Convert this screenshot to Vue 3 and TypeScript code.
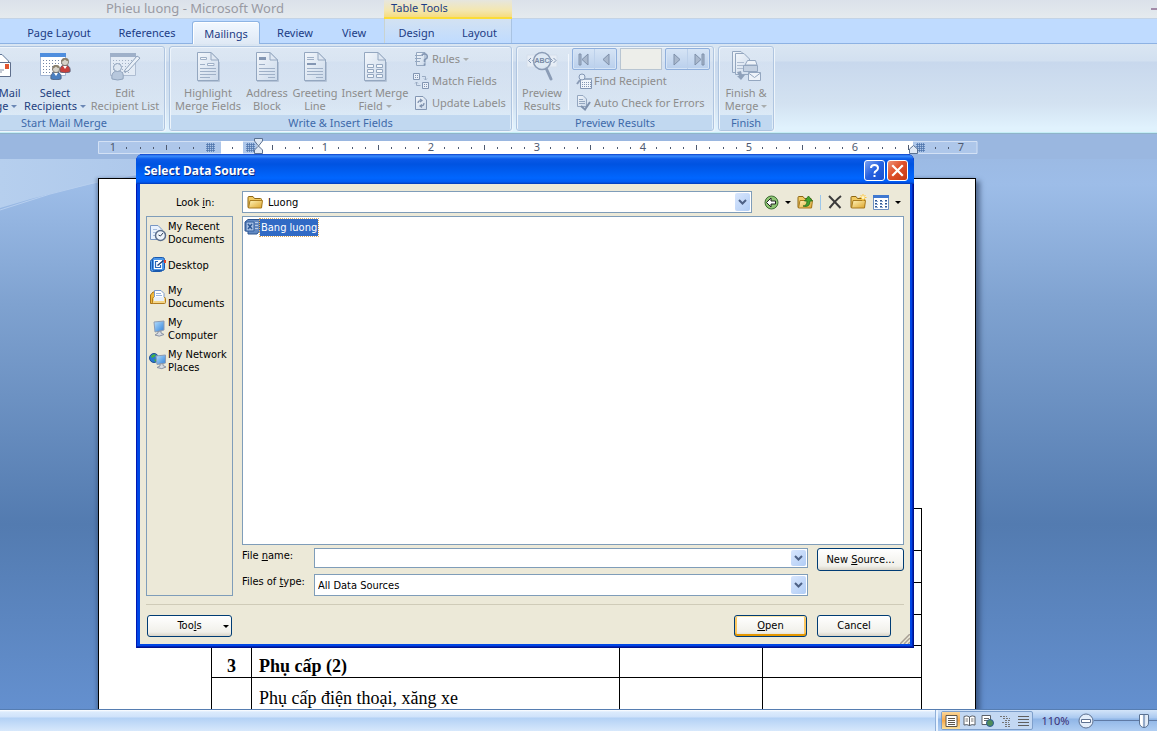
<script setup lang="ts">
import { ref } from 'vue'

interface Tab { label: string; width: number; active?: boolean }
interface Tick { x: number; kind: 'dot' | 'half' }
interface Place { id: string; lines: string[] }

const tabs: Tab[] = [
  { label: 'Page Layout', width: 88 },
  { label: 'References', width: 88 },
  { label: 'Mailings', width: 68, active: true },
  { label: 'Review', width: 70 },
  { label: 'View', width: 48 },
]
const toolTabs = ['Design', 'Layout']

const INCH = 106
const ORIGIN = 121
const ticks: Tick[] = []
for (let i = -9; i <= 56; i++) {
  if (i % 8 === 0 || i === -1 || i === 2 || i === 53) continue
  const x = Math.round(ORIGIN + (i * INCH) / 8)
  if (x > 2 && x < 878) ticks.push({ x, kind: Math.abs(i) % 4 === 0 ? 'half' : 'dot' })
}
const numbers = [-1, 1, 2, 3, 4, 5, 6, 7].map((n) => ({ n: Math.abs(n), x: ORIGIN + n * INCH }))

const places: Place[] = [
  { id: 'recent', lines: ['My Recent', 'Documents'] },
  { id: 'desktop', lines: ['Desktop'] },
  { id: 'docs', lines: ['My', 'Documents'] },
  { id: 'computer', lines: ['My', 'Computer'] },
  { id: 'network', lines: ['My Network', 'Places'] },
]

const fileName = ref('')
const zoom = ref(45)
</script>

<template>
  <div class="word">
    <svg class="defs" width="0" height="0" aria-hidden="true">
      <defs>
        <linearGradient id="gPaper" x1="0" y1="0" x2="1" y2="1">
          <stop offset="0" stop-color="#f2f6fb" /><stop offset="1" stop-color="#ccdaeb" />
        </linearGradient>
        <linearGradient id="gFolder" x1="0" y1="0" x2="1" y2="1">
          <stop offset="0" stop-color="#fff3b8" /><stop offset="1" stop-color="#dda52c" />
        </linearGradient>
        <linearGradient id="gScreen" x1="0" y1="0" x2="1" y2="1">
          <stop offset="0" stop-color="#b9e2ff" /><stop offset="1" stop-color="#2f7fd8" />
        </linearGradient>
        <linearGradient id="gSwoosh" x1="0" y1="0" x2="1" y2="0">
          <stop offset="0" stop-color="#b6cfee" /><stop offset="1" stop-color="#a5c1e8" />
        </linearGradient>
        <symbol id="page" viewBox="0 0 32 32">
          <path d="M5.500 2.500H19L26.500 10V30.500H5.500Z" fill="url(#gPaper)" stroke="#94a7c0" />
          <path d="M19 2.500V10H26.500Z" fill="#dfe8f3" stroke="#94a7c0" />
          <path d="M6 31.500H27.500V12" fill="none" stroke="#b5c4d8" />
        </symbol>
        <symbol id="person" viewBox="0 0 12 16">
          <path d="M1 15C0 10 3 8 6 8S12 10 11 15Q6 17 1 15Z" fill="currentColor" stroke="#52617a" stroke-width=".8" />
          <path d="M4 9L6 12L8 9Z" fill="#fff" />
          <circle cx="6" cy="5" r="3.600" fill="#d7d3c9" stroke="#766f66" stroke-width=".8" />
          <path d="M2.500 5Q2 1 6 1T9.500 4Q7 4 6 2.500Q4 4 2.500 5Z" fill="#8a7f6b" />
        </symbol>
        <symbol id="folder" viewBox="0 0 16 16">
          <path d="M1 13.500V3.500Q1 2.500 2 2.500H6L7.500 4.500H13.500Q14.500 4.500 14.500 5.500V13.500Z" fill="#f1ca62" stroke="#8d6717" />
          <path d="M1.500 14L3 6.500H15.500L14.500 14Z" fill="url(#gFolder)" stroke="#a97b1f" />
        </symbol>
        <symbol id="chev" viewBox="0 0 9 6"><path d="M1 1L4.500 4.500L8 1" fill="none" stroke="#4d6185" stroke-width="2" /></symbol>
      </defs>
    </svg>

    <header class="titlebar">
      <h1>Phieu luong - Microsoft Word</h1>
      <span class="minimise"></span>
    </header>

    <nav class="tabs" aria-label="Ribbon tabs">
      <button v-for="t in tabs" :key="t.label" class="tab" :class="{ active: t.active }" :style="{ width: t.width + 'px' }">{{ t.label }}</button>
      <div class="context">
        <span class="context-title">Table Tools</span>
        <button v-for="t in toolTabs" :key="t" class="tab tool">{{ t }}</button>
      </div>
    </nav>

    <section class="ribbon">
      <div class="group g-start">
        <div class="body">
          <button class="big first">
            <svg width="32" height="32" viewBox="0 0 32 32">
              <path d="M9.500 4.500H22L28.500 11V24.500H9.500Z" fill="#fff" stroke="#5f7697" />
              <path d="M15.500 12.500H30.500V26.500H15.500Z" fill="#fff" stroke="#5f6f8c" />
              <path d="M25 14h4v5h-4z" fill="#e2552e" /><path d="M18 20h6M18 22h4" stroke="#8a94a8" />
            </svg>
            <span>Start Mail</span><span>Merge <i class="dd"></i></span>
          </button>
          <button class="big select">
            <svg width="32" height="32" viewBox="0 0 32 32">
              <path d="M1.500 3.500H26.500V25.500H1.500Z" fill="#fff" stroke="#a3b6d4" />
              <path d="M1 3h26v4H1z" fill="#4f8ede" />
              <path d="M4 10.500H26M4 13.500H26M4 16.500H24M4 19.500H22M4 22.500H20" stroke="#7386a6" stroke-dasharray="1 2" />
              <use href="#person" x="20" y="7" width="12" height="16" color="#c8403c" />
              <use href="#person" x="11" y="14" width="12" height="16" color="#4b7fc0" />
            </svg>
            <span>Select</span><span>Recipients <i class="dd"></i></span>
          </button>
          <button class="big edit off">
            <svg width="32" height="32" viewBox="0 0 32 32">
              <path d="M1.500 3.500H26.500V25.500H1.500Z" fill="#e3ebf5" stroke="#aebdd2" />
              <path d="M1 3h26v4H1z" fill="#9eb0c9" />
              <path d="M4 10.500H26M4 13.500H26M4 16.500H24M4 19.500H22M4 22.500H20" stroke="#a3b1c5" stroke-dasharray="1 2" />
              <path d="M3 29C2 23 5 21 9 21S15 23 14 29Q9 31 3 29Z" fill="#b7c7dc" stroke="#8fa2bb" />
              <circle cx="8.500" cy="17.500" r="4" fill="#dde6f1" stroke="#8fa2bb" />
              <path d="M16 20L28 6L31 8L19 21L15 22Z" fill="#e9f0f8" stroke="#8fa2bb" />
            </svg>
            <span>Edit</span><span>Recipient List</span>
          </button>
        </div>
        <h2>Start Mail Merge</h2>
      </div>

      <div class="group g-write">
        <div class="body">
          <button class="big off w-hl">
            <svg width="32" height="32" viewBox="0 0 32 32"><use href="#page" />
              <path d="M8.500 7.500H14.500V9.500H8.500Z" fill="#f3f7fb" stroke="#9fb0c7" />
              <path d="M15.500 13.500H22V15.500H15.500Z" fill="#f3f7fb" stroke="#9fb0c7" />
              <path d="M8 14.500H13M8 18.500H24M8 21.500H24M8 24.500H24M8 27.500H18" stroke="#9fb0c7" />
            </svg>
            <span>Highlight</span><span>Merge Fields</span>
          </button>
          <button class="big off w-ad">
            <svg width="32" height="32" viewBox="0 0 32 32"><use href="#page" />
              <path d="M8 7H15V10H8Z" fill="#8396b3" />
              <path d="M8 14.500H14M8 18.500H24M8 21.500H24M8 24.500H24M17 27.500H24" stroke="#9fb0c7" />
            </svg>
            <span>Address</span><span>Block</span>
          </button>
          <button class="big off w-gr">
            <svg width="32" height="32" viewBox="0 0 32 32"><use href="#page" />
              <path d="M8 13H17V15H8Z" fill="#8396b3" />
              <path d="M8 7.500H15M8 9.500H15M8 18.500H24M8 21.500H24M8 24.500H24M17 27.500H24" stroke="#9fb0c7" />
            </svg>
            <span>Greeting</span><span>Line</span>
          </button>
          <button class="big off w-in">
            <svg width="32" height="32" viewBox="0 0 32 32"><use href="#page" />
              <path d="M8.500 14.500H14.500V17.500H8.500ZM17.500 14.500H23.500V17.500H17.500ZM8.500 19.500H14.500V22.500H8.500ZM17.500 19.500H23.500V22.500H17.500ZM8.500 24.500H14.500V27.500H8.500ZM17.500 24.500H23.500V27.500H17.500Z" fill="#f3f7fb" stroke="#94a7c0" />
            </svg>
            <span>Insert Merge</span><span>Field <i class="dd"></i></span>
          </button>
          <div class="stack">
            <button class="small">
              <svg width="16" height="16" viewBox="0 0 16 16"><path d="M3.500 1.500H12V14.500H3.500Z" fill="url(#gPaper)" stroke="#94a7c0" /><path d="M2 4.500H8M2 7.500H8M2 10.500H7" stroke="#94a7c0" /><path d="M9 5Q9 2.500 12 3T14 7L11.500 9V11M11.500 12.500V14.500" fill="none" stroke="#8396b3" stroke-width="1.600" /></svg>
              Rules <i class="dd"></i>
            </button>
            <button class="small">
              <svg width="16" height="16" viewBox="0 0 16 16"><path d="M.500.500H6.500V6.500H.500ZM9.500 9.500H15.500V15.500H9.500Z" fill="#e8eff8" stroke="#8396b3" /><path d="M2 2.500H5M2 4.500H5M11 11.500H14M11 13.500H14" stroke="#8396b3" stroke-dasharray="1 1" /><path d="M9 3.500H12.500V7M11 5.500L12.500 7L14 5.500M7.500 12.500H3.500V9M2 10.500L3.500 9L5 10.500" fill="none" stroke="#9aabc3" /></svg>
              Match Fields
            </button>
            <button class="small">
              <svg width="16" height="16" viewBox="0 0 16 16"><path d="M2.500 1.500H10L13.500 5V14.500H2.500Z" fill="url(#gPaper)" stroke="#8396b3" /><path d="M5 8Q5 5.500 8 5.500M7 4L9 5.500L7 7M11 8Q11 11 8 11M9 9.500L7 11L9 12.500" fill="none" stroke="#7f92ae" stroke-width="1.200" /></svg>
              Update Labels
            </button>
          </div>
        </div>
        <h2>Write &amp; Insert Fields</h2>
      </div>

      <div class="group g-preview">
        <div class="body">
          <button class="big off w-pr">
            <svg width="32" height="32" viewBox="0 0 32 32">
              <path d="M1 5H31V17H1Z" fill="#e6edf6" stroke="#d5dfec" />
              <path d="M5 8L2.500 10.500L5 13M9 8L6.500 10.500L9 13M24 8L26.500 10.500L24 13M27.500 8L30 10.500L27.500 13" fill="none" stroke="#8396b3" />
              <path d="M20 18L25 29" stroke="#8b9cb6" stroke-width="3" stroke-linecap="round" />
              <circle cx="16" cy="11" r="8.500" fill="#dce7f4" fill-opacity=".8" stroke="#8b9cb6" stroke-width="1.500" />
              <text x="16" y="13" text-anchor="middle" class="abc">ABC</text>
            </svg>
            <span>Preview</span><span>Results</span>
          </button>
          <div class="preview-tools">
            <div class="nav-row">
              <div class="pair">
                <button aria-label="First record"><svg width="12" height="13" viewBox="0 0 12 13"><path d="M1 1h2v11H1zM10 1v11L4 6.500z" fill="#a9b8cd" stroke="#7f90aa" /></svg></button>
                <button aria-label="Previous record"><svg width="8" height="13" viewBox="0 0 8 13"><path d="M7 1v11L1 6.500z" fill="#a9b8cd" stroke="#7f90aa" /></svg></button>
              </div>
              <input class="record" aria-label="Record" disabled />
              <div class="pair">
                <button aria-label="Next record"><svg width="8" height="13" viewBox="0 0 8 13"><path d="M1 1v11L7 6.500z" fill="#a9b8cd" stroke="#7f90aa" /></svg></button>
                <button aria-label="Last record"><svg width="12" height="13" viewBox="0 0 12 13"><path d="M9 1h2v11H9zM2 1v11L8 6.500z" fill="#a9b8cd" stroke="#7f90aa" /></svg></button>
              </div>
            </div>
            <button class="small">
              <svg width="16" height="16" viewBox="0 0 16 16"><path d="M4.500 5.500H15.500V15.500H4.500Z" fill="#f1f5fa" stroke="#8396b3" /><path d="M5 5h11v2H5z" fill="#9fb0c7" /><path d="M6 9.500H15M6 11.500H15M6 13.500H15" stroke="#8396b3" stroke-dasharray="1 1" /><path d="M4 7L1 11" stroke="#8b9cb6" stroke-width="2" /><circle cx="6" cy="4" r="3" fill="#e3ecf7" stroke="#8396b3" /></svg>
              Find Recipient
            </button>
            <button class="small">
              <svg width="16" height="16" viewBox="0 0 16 16"><path d="M1.500.500H7L10.500 4V11.500H1.500Z" fill="url(#gPaper)" stroke="#94a7c0" /><path d="M3 4.500H7M3 6.500H9M3 8.500H9" stroke="#94a7c0" /><path d="M5 11L9 14.500L14 7" fill="none" stroke="#7f92ae" stroke-width="2" /></svg>
              Auto Check for Errors
            </button>
          </div>
        </div>
        <h2>Preview Results</h2>
      </div>

      <div class="group g-finish">
        <div class="body">
          <button class="big off w-fi">
            <svg width="32" height="32" viewBox="0 0 32 32">
              <path d="M2.500 1.500H11L16.500 7V22.500H2.500Z" fill="url(#gPaper)" stroke="#94a7c0" />
              <path d="M5.500 3.500H14L19.500 9V24.500H5.500Z" fill="url(#gPaper)" stroke="#94a7c0" />
              <path d="M7 12.500H14M7 15.500H14M7 18.500H14" stroke="#aebcd0" />
              <path d="M17.500 10.500H25.500L27 15H15Z" fill="#eef3f9" stroke="#94a7c0" />
              <path d="M13.500 15.500H27.500V21.500H13.500Z" fill="#c3d0e1" stroke="#94a7c0" />
              <path d="M18.500 22.500H30.500V30.500H18.500Z" fill="#eef3f9" stroke="#94a7c0" /><path d="M18.500 23L24.500 27.500L30.500 23" fill="none" stroke="#94a7c0" />
              <path d="M7 22L9 26L7 26L11 30L15 25H12L11 21Z" fill="#8fa1ba" />
            </svg>
            <span>Finish &amp;</span><span>Merge <i class="dd"></i></span>
          </button>
        </div>
        <h2>Finish</h2>
      </div>
    </section>

    <main class="workspace">
      <div class="ruler-strip">
        <svg class="ruler" width="880" height="22" viewBox="0 0 880 22" role="img" aria-label="Horizontal ruler">
          <path d="M.500 5.500H879V17.500H.500Z" fill="#aec7ea" stroke="#d3e1f5" />
          <path d="M123 5h22v13h-22zM159 5h656v13H159z" fill="#fff" />
          <template v-for="t in ticks" :key="t.x">
            <rect :x="t.x" :y="t.kind === 'half' ? 9 : 11" width="1" :height="t.kind === 'half' ? 5 : 2" fill="#4e5a70" />
          </template>
          <text v-for="m in numbers" :key="m.x" :x="m.x" y="15" text-anchor="middle">{{ m.n }}</text>
          <path d="M109.500 7V16M111.500 7V16M113.500 7V16M115.500 7V16M108 8.500H117M108 10.500H117M108 12.500H117M108 14.500H117M149.500 7V16M151.500 7V16M153.500 7V16M155.500 7V16M148 8.500H157M148 10.500H157M148 12.500H157M148 14.500H157M819.500 7V16M821.500 7V16M823.500 7V16M825.500 7V16M818 8.500H827M818 10.500H827M818 12.500H827M818 14.500H827" stroke="#4d74ab" stroke-opacity=".75" fill="none" />
          <path d="M156.500 2.500H164.500V5L160.500 10L156.500 5ZM160.500 10L164.500 14V17.500H156.500V14Z" fill="#dfe8f4" stroke="#5a7191" />
          <path d="M811.500 17.500V13L815.500 9.500L819.500 13V17.500Z" fill="#dfe8f4" stroke="#5a7191" />
        </svg>
      </div>

      <div class="canvas">
        <svg class="swoosh" width="300" height="60" viewBox="0 0 300 60" aria-hidden="true">
          <path d="M0 0H300Q140 5 0 49Z" fill="url(#gSwoosh)" />
          <path d="M0 51Q100 16 200 6" fill="none" stroke="#b7cfef" />
        </svg>
        <article class="sheet">
          <table class="pay">
            <colgroup><col class="c1" /><col class="c2" /><col class="c3" /><col class="c4" /></colgroup>
            <tbody>
              <tr class="head"><td></td><td></td><td></td><td></td></tr>
              <tr><td></td><td></td><td></td><td></td></tr>
              <tr><td></td><td></td><td></td><td></td></tr>
              <tr class="short"><td></td><td></td><td></td><td></td></tr>
              <tr class="bold"><td>3</td><td>Phụ cấp (2)</td><td></td><td></td></tr>
              <tr><td></td><td>Phụ cấp điện thoại, xăng xe</td><td></td><td></td></tr>
            </tbody>
          </table>
        </article>
      </div>
    </main>

    <footer class="status">
      <div class="status-left"></div>
      <div class="status-right">
        <div class="views">
          <button class="on" aria-label="Print layout"><svg width="13" height="12" viewBox="0 0 13 12"><path d="M1 .500H12V11.500H1Z" fill="#fff" stroke="#5d564b" /><path d="M3 3.500H10M3 5.500H10M3 7.500H10M3 9.500H10" stroke="#5d564b" /></svg></button>
          <button aria-label="Full screen reading"><svg width="13" height="12" viewBox="0 0 13 12"><path d="M6.500 2Q4 0 1 1.500V10Q4 9 6.500 10.500Q9 9 12 10V1.500Q9 0 6.500 2V11" fill="#fff" stroke="#5b6068" /><path d="M2.500 4H5M2.500 6H5M8 4H10.500M8 6H10.500" stroke="#777" /></svg></button>
          <button aria-label="Web layout"><svg width="13" height="12" viewBox="0 0 13 12"><path d="M1 .500H9.500V9.500H1Z" fill="#fff" stroke="#5b6068" /><path d="M3 3.500H8M3 5.500H7" stroke="#666" /><circle cx="9" cy="8" r="3.500" fill="#4f8c5a" stroke="#2e5d94" /></svg></button>
          <button aria-label="Outline"><svg width="13" height="12" viewBox="0 0 13 12"><path d="M1 1.500H8M4 3.500H11M6 5.500H12M3 7.500H10M6 9.500H12M6 11.500H12" stroke="#747474" stroke-dasharray="2 1" /></svg></button>
          <button aria-label="Draft"><svg width="13" height="12" viewBox="0 0 13 12"><path d="M1 1.500H12M1 4.500H12M1 7.500H12M1 10.500H12" stroke="#5f5f5f" /></svg></button>
        </div>
        <button class="percent">110%</button>
        <button class="minus" aria-label="Zoom out"><svg width="16" height="16" viewBox="0 0 16 16"><circle cx="8" cy="8" r="7" fill="#e3edfa" stroke="#5d7090" /><path d="M3.500 6.500H12.500V9.500H3.500Z" fill="#fff" stroke="#5d7090" /></svg></button>
        <input v-model="zoom" class="zoom" type="range" aria-label="Zoom" />
      </div>
    </footer>

    <section class="dialog" role="dialog" aria-labelledby="dlg-title">
      <header class="caption">
        <h2 id="dlg-title">Select Data Source</h2>
        <button class="cap help" aria-label="Help"><svg width="17" height="17" viewBox="0 0 17 17"><path d="M5 6Q5 3 8.500 3T12 6Q12 8 10 9Q8.500 9.500 8.500 11.500M8.500 13V15" fill="none" stroke="#fff" stroke-width="2" /></svg></button>
        <button class="cap close" aria-label="Close"><svg width="17" height="17" viewBox="0 0 17 17"><path d="M4 4L13 13M13 4L4 13" stroke="#fff" stroke-width="2.200" stroke-linecap="square" /></svg></button>
      </header>

      <div class="client">
        <div class="look">
          <label for="look">Look <u>i</u>n:</label>
          <div class="combo look-combo">
            <svg class="combo-icon" width="16" height="16"><use href="#folder" /></svg>
            <select id="look"><option>Luong</option></select>
            <span class="arrow"><svg width="9" height="6"><use href="#chev" /></svg></span>
          </div>
          <div class="tools">
            <button aria-label="Back"><svg width="15" height="15" viewBox="0 0 15 15"><circle cx="7.500" cy="7.500" r="6.500" fill="#8fc573" stroke="#3f6f35" /><path d="M2.500 7.500L7 3V6H11.500V9H7V12Z" fill="#fff" stroke="#222" /></svg></button>
            <button aria-label="Back history"><i class="tri"></i></button>
            <button class="gap-up" aria-label="Up one level"><svg width="17" height="16" viewBox="0 0 17 16"><use href="#folder" width="16" height="16" /><path d="M6 12Q10 12 10 7H7.500L11.500 2L15.500 7H13Q13 14 6 12Z" fill="#43a32d" stroke="#24681a" stroke-width=".8" /></svg></button>
            <span class="bar"></span>
            <button aria-label="Delete"><svg width="14" height="14" viewBox="0 0 14 14"><path d="M1 1Q6 6 12.500 13M13 1Q8 5 1.500 13" fill="none" stroke="#3b3b3b" stroke-width="2" /></svg></button>
            <button class="gap-new" aria-label="New folder"><svg width="17" height="16" viewBox="0 0 17 16"><use href="#folder" width="16" height="16" /><path d="M13 0V7M9.500 3.500H16.500M10.500 1L15.500 6M15.500 1L10.500 6" stroke="#ffc73b" /><circle cx="13" cy="3.500" r="1.500" fill="#fff6c7" /></svg></button>
            <button class="gap-view" aria-label="Views"><svg width="16" height="15" viewBox="0 0 16 15"><path d="M.500 .500H15.500V14.500H.500Z" fill="#fff" stroke="#6c8fc0" /><path d="M0 0H16V3H0Z" fill="#3f78d0" /><path d="M2 5.500H4M2 8.500H4M2 11.500H4M7 5.500H9M7 8.500H9M7 11.500H9M12 5.500H14M12 8.500H14M12 11.500H14" stroke="#31578f" /><path d="M2 6.500H5M2 9.500H5M2 12.500H5M7 6.500H10M7 9.500H10M7 12.500H10M12 6.500H14M12 9.500H14M12 12.500H14" stroke="#8ba8d2" /></svg></button>
            <button aria-label="View list"><i class="tri"></i></button>
          </div>
        </div>

        <div class="middle">
          <nav class="places" aria-label="Places">
            <button v-for="p in places" :key="p.id" class="place">
              <svg width="18" height="18" viewBox="0 0 18 18">
                <template v-if="p.id === 'recent'">
                  <path d="M1.500 1.500H9L13 5.500V15.500H1.500Z" fill="#e9f2fd" stroke="#7796c4" /><path d="M4 5.500H8M4 8.500H7M4 11.500H7" stroke="#a7bedf" />
                  <circle cx="11.500" cy="11.500" r="5" fill="#eef4fb" stroke="#5c6f8c" stroke-width="1.500" /><path d="M14 9L11.500 12L9.500 11" fill="none" stroke="#35425a" />
                </template>
                <template v-else-if="p.id === 'desktop'">
                  <rect x="1.500" y="3.500" width="12" height="12" rx="2" fill="#5aa2ee" stroke="#1959ae" /><rect x="3.500" y="1.500" width="12" height="13" rx="2" fill="#4c97ea" stroke="#1959ae" />
                  <path d="M5 4H13V13H5Z" fill="#fff" /><path d="M9 5.500H6.500V11.500H11.500V9" fill="none" stroke="#2767bb" stroke-width="1.200" /><path d="M8.500 9.500L14.500 4.500" stroke="#1d3f78" stroke-width="1.500" /><path d="M15 4h2v3h-2z" fill="#e0402c" />
                </template>
                <template v-else-if="p.id === 'docs'">
                  <path d="M1.500 15.500V7L4 4H8V15.500Z" fill="#f0b93c" stroke="#a8721a" /><path d="M5.500 2.500H12L15 5.500V10H5.500Z" fill="#fff" stroke="#7b9acc" /><path d="M7 5.500H12M7 7.500H13" stroke="#9ab6e0" />
                  <rect x="3.500" y="9.500" width="13" height="6" rx="1" fill="#f4d587" stroke="#b07c20" /><path d="M5 9h10v4H5z" fill="#e9f1fb" />
                </template>
                <template v-else-if="p.id === 'computer'">
                  <path d="M5 2L15 1V10L6 12Z" fill="url(#gScreen)" stroke="#8c9cb5" /><path d="M9 11.500V13L6 15Q10 17.500 15 14.500L12 13V11Z" fill="#d7dbe2" stroke="#8a93a3" />
                </template>
                <template v-else>
                  <circle cx="5" cy="6" r="4.500" fill="#2a78d2" stroke="#1d4f94" /><path d="M2 4Q5 1 7 3Q5 6 3 6ZM5 7L8 8L6 10Z" fill="#47b23e" />
                  <path d="M7 4L16.500 3V11L8 12.500Z" fill="url(#gScreen)" stroke="#8c9cb5" /><path d="M11 12V14L8 15.500Q13 18 17 15L14 13.500V11.500Z" fill="#d7dbe2" stroke="#8a93a3" />
                </template>
              </svg>
              <span><template v-for="(l, i) in p.lines" :key="l"><br v-if="i" />{{ l }}</template></span>
            </button>
          </nav>

          <div class="right">
            <div class="files" role="listbox" aria-label="Files">
              <div class="file" role="option" aria-selected="true">
                <svg width="16" height="16" viewBox="0 0 16 16"><path d="M1 3L4 .500H15.500V12L13 15H4V12H1Z" fill="#6289c2" stroke="#2d548f" /><path d="M2 3H10V12H2Z" fill="#a6c0e5" stroke="#35619f" /><path d="M4 5L8 10M8 5L4 10" stroke="#2e5a98" stroke-width="1.500" /><path d="M11 3.500H14M11 6.500H14M11 9.500H14" stroke="#b6cbe9" /></svg>
                <span>Bang luong</span>
              </div>
            </div>
            <div class="fields">
              <label for="fname">File <u>n</u>ame:</label>
              <div class="combo fname">
                <input id="fname" v-model="fileName" type="text" />
                <button class="arrow" aria-label="Recent names"><svg width="9" height="6"><use href="#chev" /></svg></button>
              </div>
              <button class="xp wide">New <u>S</u>ource...</button>
              <label for="ftype">Files of <u>t</u>ype:</label>
              <div class="combo">
                <select id="ftype"><option>All Data Sources</option></select>
                <span class="arrow"><svg width="9" height="6"><use href="#chev" /></svg></span>
              </div>
            </div>
          </div>
        </div>

        <div class="actions">
          <button class="xp tools-btn"><span>Too<u>l</u>s</span><i class="tri"></i></button>
          <button class="xp open"><u>O</u>pen</button>
          <button class="xp cancel">Cancel</button>
        </div>
        <svg class="grip" width="10" height="10" viewBox="0 0 10 10" aria-hidden="true"><path d="M0 10L10 0M4 10L10 4M8 10L10 8" stroke="#a89f94" stroke-width="1.500" /></svg>
      </div>
    </section>
  </div>
</template>

<style>
html, body { margin: 0; height: 100%; overflow: hidden; }
#app { height: 100%; }
</style>

<style scoped>
* { box-sizing: border-box; }
button { font: inherit; color: inherit; background: none; border: 0; padding: 0; margin: 0; }
h1, h2 { margin: 0; font-weight: 400; }
svg { display: block; flex: none; }
.defs { position: absolute; }
.word { position: relative; height: 100vh; display: flex; flex-direction: column; overflow: hidden; font-family: "Noto Sans", "Open Sans", sans-serif; font-size: 11px; color: #1f3f7f; }

.titlebar { flex: none; height: 19px; padding-left: 106px; background: linear-gradient(#dbe1ea, #e5eaee); border-bottom: 1px solid #c3d3e6; display: flex; justify-content: space-between; }
.titlebar h1 { font-size: 13px; line-height: 16px; color: #999aa3; white-space: nowrap; }
.minimise { width: 6px; height: 2px; margin-top: 8px; background: #a28ba8; }

.tabs { flex: none; position: relative; display: flex; height: 25px; padding-left: 15px; background: #bfdbff; border-bottom: 1px solid #8db2e3; align-items: stretch; }
.tab { text-align: center; line-height: 28px; white-space: nowrap; color: #1c3c85; }
.tab.active { margin: 2px 0 -1px 1px; line-height: 23px; background: linear-gradient(#f2f8ff, #dfe9f5); border: 1px solid #8eb4e3; border-bottom: 0; border-radius: 3px 3px 0 0; box-shadow: inset 1px 1px #fff; }
.context { width: 128px; margin-left: 6px; position: relative; display: grid; grid-template-columns: 1fr 1fr; border-left: 1px solid #c9d3d0; border-right: 1px solid #a9c3e2; background: linear-gradient(#d3e2f2, #bfdbff); }
.context-title { position: absolute; left: -1px; right: -1px; bottom: 100%; height: 19px; padding-left: 7px; line-height: 16px; background: linear-gradient(#e6e6df, #f4e7b0 60%, #f7dc80); border-bottom: 2px solid #fbdc38; color: #1c3c85; }

.ribbon { flex: none; display: flex; gap: 4px; height: 90px; padding: 2px 0 3px; background: linear-gradient(#dae6f2 0, #d2e0f0 17px, #c8d8ed 18px, #d3e2f1 60px, #e0f2fd 84px); border-bottom: 1px solid #8fb4c9; box-shadow: inset 0 -1px #c5eef6; }
.group { display: flex; flex: none; flex-direction: column; height: 85px; border: 1px solid #afc5e0; border-radius: 3px; box-shadow: inset 1px 1px #edf4fb, 1px 1px #eef5fb; background: linear-gradient(rgba(225,234,245,.5), rgba(225,234,245,.3)); overflow: hidden; }
.group h2 { flex: none; height: 15px; margin: 0 1px; font-size: 11px; line-height: 15px; text-align: center; white-space: nowrap; background: #c1d8f0; color: #3e6aaa; }
.body { flex: 1; display: flex; min-height: 0; }
.g-start { width: 202px; margin-left: -37px; }
.g-write { width: 343px; }
.g-preview { width: 198px; }
.g-finish { width: 56px; }
.big { flex: none; display: flex; flex-direction: column; align-items: center; padding-top: 3px; line-height: 13px; white-space: nowrap; }
.big svg { margin-bottom: 4px; }
.off, .small { color: #8d8d8d; }
.first { width: 57px; padding-left: 7px; }
.select { width: 66px; margin-left: 1px; }
.edit { width: 74px; }
.w-hl { width: 72px; margin-left: 2px; }
.w-ad { width: 46px; }
.w-gr { width: 50px; }
.w-in { width: 70px; }
.w-pr { width: 50px; }
.w-fi { width: 54px; }
.dd { display: inline-block; border: 3px solid transparent; border-top-color: #6b87b5; border-bottom: 0; vertical-align: 2px; }
.off .dd, .small .dd { border-top-color: #a9adae; }
.stack { display: flex; flex-direction: column; padding-left: 3px; padding-top: 1px; }
.small { display: flex; align-items: center; gap: 3px; height: 22px; line-height: 22px; white-space: nowrap; text-align: left; }
.abc { font: bold 7px "Liberation Sans", sans-serif; fill: #7889a5; }
.preview-tools { position: relative; margin: 1px 0 0 1px; padding-left: 4px; }
.preview-tools::before { content: ""; position: absolute; left: 0; top: 6px; bottom: 5px; width: 1px; background: #f2f7fd; }
.nav-row { display: flex; gap: 3px; }
.preview-tools .small { margin-left: 4px; gap: 2px; }
.pair { display: flex; width: 45px; height: 22px; border: 1px solid #8fafdc; border-radius: 2px; background: linear-gradient(#d6e4f5, #b9cfec); box-shadow: inset 0 0 0 1px #d5e4f6; }
.pair button { flex: 1; display: grid; place-items: center; }
.pair button + button { border-left: 1px solid #bcd0ea; }
.record { width: 42px; height: 22px; padding: 0; border: 1px solid #b8c5d2; background: #edeeea; }

.workspace { flex: 1; min-height: 0; display: flex; flex-direction: column; background: linear-gradient(#9ab7e0 0, #9dbde8 50px, #7fa2d0 170px, #537bb0 390px, #6490cf 100%); }
.ruler-strip { flex: none; height: 25px; padding: 2px 0 0 98px; background: #9ab7e0; }
.ruler text { font: 11px "Noto Sans", sans-serif; fill: #4e5a70; }
.canvas { flex: 1; position: relative; overflow: hidden; padding: 19px 0 0 98px; }
.swoosh { position: absolute; left: 0; top: 0; }
.sheet { position: relative; width: 878px; height: 100%; min-height: 640px; padding: 329px 0 0 112px; background: #fff; border: 1px solid #000; box-shadow: 4px 3px 5px rgba(35,55,90,.6), -2px 0 3px rgba(35,55,90,.3); }
.pay { border-collapse: collapse; table-layout: fixed; width: 711px; font: 18px "Liberation Serif", serif; color: #000; }
.c1 { width: 40px; } .c2 { width: 368px; } .c3 { width: 143px; } .c4 { width: 159px; }
.pay td { height: 32px; padding: 9px 7px 0; border: 1px solid #000; line-height: 22px; white-space: nowrap; vertical-align: top; }
.pay .head td { height: 42px; }
.pay .short td { height: 31px; padding-bottom: 0; }
.pay .bold { font-weight: 700; }
.pay td:first-child { text-align: center; }

.status { flex: none; position: relative; display: flex; height: 22px; border-top: 1px solid #567db1; color: #3b2f76; background: linear-gradient(#fff 0, #dcebfd 2px, #cfe2fa 7px, #b3d1f5 8px, #d7e8fc 100%); overflow: hidden; }
.status-left { flex: 1; border-right: 1px solid #8fafd9; }
.status-right { flex: none; width: 221px; display: flex; align-items: center; padding-left: 3px; border-left: 2px solid #e9f3ff; background: linear-gradient(#d3e4f9, #a9c8f0 8px, #8fb5e6 9px, #b0cef3); overflow: hidden; }
.views { flex: none; display: flex; height: 19px; border: 1px solid #7e9fcb; border-radius: 2px; background: #c3d8f3; }
.views button { width: 18px; display: grid; place-items: center; }
.views .on { background: linear-gradient(#fbd79a, #f7a94a 50%, #fbe09c); }
.percent { flex: none; width: 45px; }
.minus { flex: none; }
.zoom { flex: none; appearance: none; width: 111px; height: 18px; margin: 0; background: linear-gradient(#5f7aa5, #5f7aa5) center / 100% 1px no-repeat; }
.zoom::-webkit-slider-thumb { appearance: none; width: 10px; height: 14px; border: 1px solid #5a7191; border-radius: 1px 1px 5px 5px; background: linear-gradient(90deg, #fff 30%, #8ca3c4 45%, #8ca3c4 55%, #e4edf8 70%); }

.dialog { position: absolute; left: 136px; top: 154px; width: 778px; border-radius: 7px 7px 0 0; padding: 0 4px 4px; background: #0046e5; box-shadow: inset 1px 0 #0019b5, inset -1px -1px #00138c, inset 0 -2px #0024b8, inset -2px 0 #0024b8; font-family: "DejaVu Sans Condensed", "Noto Sans", sans-serif; font-size: 11px; color: #000; overflow: hidden; }
.caption { display: flex; align-items: center; gap: 2px; height: 30px; margin: 0 -4px; padding: 3px 6px 0 8px; background: linear-gradient(#0a3fc8 0, #3b8dfd 2px, #0b5ae8 5px, #0053e1 10px, #0066ff 24px, #005af2 28px, #0138b4); }
.caption h2 { flex: 1; font: bold 12px "Noto Sans", sans-serif; color: #fff; text-shadow: 1px 1px #0b2a83; }
.cap { width: 21px; height: 21px; display: grid; place-items: center; border: 1px solid #fff; border-radius: 3px; }
.help { background: linear-gradient(135deg, #7ba1f0, #2560df 50%, #1a4fd0); }
.close { background: linear-gradient(135deg, #ee9379, #e0502a 45%, #c43a15); }
.client { position: relative; background: #ece9d8; padding: 7px 6px 8px; height: 460px; display: flex; flex-direction: column; }
.look { display: flex; align-items: center; height: 22px; }
.look > label { flex: none; width: 96px; padding-left: 30px; }
.combo { position: relative; display: flex; height: 22px; background: #fff; border: 1px solid #7f9db9; }
.look-combo { flex: none; width: 510px; }
.combo select, .combo input { flex: 1; min-width: 0; width: 100%; appearance: none; border: 0; outline: 0; background: transparent; padding: 0 20px 0 3px; font: inherit; color: #000; }
.look-combo select { padding-left: 25px; }
.combo-icon { position: absolute; left: 4px; top: 2px; }
.arrow { position: absolute; right: 1px; top: 1px; bottom: 1px; width: 15px; display: grid; place-items: center; border-radius: 2px; background: linear-gradient(135deg, #d8e6fd, #b1cdf5); }
span.arrow { pointer-events: none; }
.tools { flex: none; display: flex; align-items: center; margin-left: 12px; }
.tri { display: block; border: 3px solid transparent; border-top-color: #000; border-bottom: 0; margin: 0 6px; }
.bar { width: 1px; height: 15px; margin: 0 7px 0 6px; background: #9cc7ea; }
.gap-new { margin-left: 8px; }
.gap-view { margin-left: 6px; }
.gap-view + button { margin-right: -6px; }
.middle { display: flex; gap: 9px; margin-top: 3px; height: 380px; }
.places { flex: none; width: 87px; border: 1px solid #7f9db9; }
.place { display: flex; align-items: center; gap: 1px; width: 100%; height: 32px; padding-left: 2px; text-align: left; line-height: 13px; white-space: nowrap; }
.right { flex: 1; min-width: 0; display: flex; flex-direction: column; }
.files { height: 329px; padding: 1px; background: #fff; border: 1px solid #7f9db9; }
.file { display: flex; align-items: center; height: 18px; }
.file span { padding: 0 1px; line-height: 17px; background: #316ac5; color: #fff; outline: 1px dotted #e0a95a; }
.fields { display: grid; grid-template-columns: 72px 1fr 87px; grid-template-rows: 22px 22px; row-gap: 4px; padding-top: 3px; }
.fields .combo { margin-right: 9px; }
.fields label { line-height: 15px; white-space: nowrap; }
.fname { height: 20px; }
.xp { height: 22px; border: 1px solid #003c74; border-radius: 3px; background: linear-gradient(#fff, #f1f0ea 80%, #d9d4c8); line-height: 20px; text-align: center; }
.wide { height: 23px; }
.actions { display: flex; gap: 10px; margin-top: 8px; padding: 10px 13px 0 1px; border-top: 1px solid #cfcbb8; }
.tools-btn { display: flex; align-items: center; width: 85px; margin-right: auto; }
.tools-btn span { flex: 1; padding-left: 8px; }
.tools-btn .tri { margin: 0 2px 0 0; }
.open { width: 73px; box-shadow: inset 0 -2px #e59700, inset 0 1px #ffe7a9, inset 2px 0 #fbc761, inset -2px 0 #fbc761; }
.cancel { width: 74px; }
.grip { position: absolute; right: 0; bottom: 0; }
</style>
